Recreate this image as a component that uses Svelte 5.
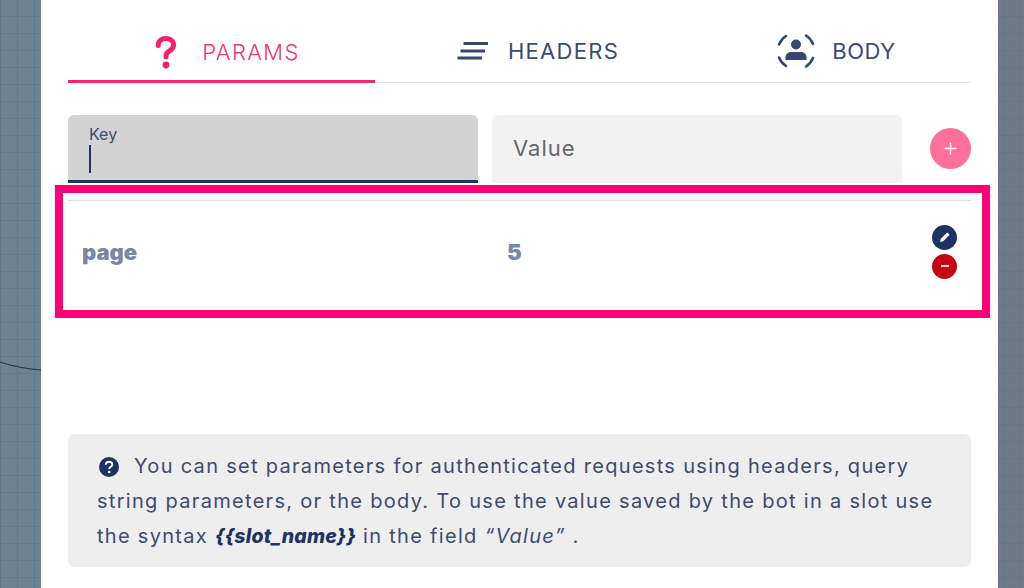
<script>
  const tabs = ['PARAMS', 'HEADERS', 'BODY'];
</script>

<div class="page">
  <svg class="curve" width="41" height="20" viewBox="0 0 41 20" aria-hidden="true">
    <path d="M0 2 C12 6 26 9 41 10" fill="none" stroke="#1f2d45" stroke-width="1" />
  </svg>
  <main class="panel">
    <nav class="tabs">
      <div class="tab active">
        <svg class="ico-q" width="22" height="34" viewBox="0 0 22 34" aria-hidden="true">
          <path d="M3.200 10.500C3.200 6 6.500 3.500 10.800 3.500S18.600 6 18.600 10c0 3-1.800 4.400-4 5.800-2.200 1.400-3.600 2.600-3.600 5.200v1" fill="none" stroke="#f7206f" stroke-width="5" stroke-linecap="round" />
          <circle cx="11" cy="30" r="3.400" fill="#f7206f" />
        </svg>
        <span>{tabs[0]}</span>
      </div>
      <div class="tab tab-headers">
        <svg width="32" height="20" viewBox="0 0 32 20" aria-hidden="true">
          <path d="M6.500 2.500H31M3.500 10H28M0.500 17H25" stroke="#36486e" stroke-width="3" />
        </svg>
        <span>{tabs[1]}</span>
      </div>
      <div class="tab tab-body">
        <svg width="40" height="40" viewBox="0 0 40 40" aria-hidden="true">
          <g fill="none" stroke="#36486e" stroke-width="2.600" stroke-linecap="round">
            <path d="M3 13.500A18 18 0 0 1 10 5" />
            <path d="M30 4.500A18 18 0 0 1 37 13" />
            <path d="M3 26.500A18 18 0 0 0 10 35" />
            <path d="M30 35.500A18 18 0 0 0 37 27" />
          </g>
          <circle cx="20" cy="13.500" r="5" fill="#36486e" />
          <path d="M9.500 29v-3c0-3 3-5 5.500-5h10c2.500 0 5.500 2 5.500 5v3z" fill="#36486e" />
        </svg>
        <span>{tabs[2]}</span>
      </div>
    </nav>

    <section class="form">
      <div class="field focused">
        <span class="label">Key</span>
        <span class="caret"></span>
      </div>
      <div class="field"><span class="placeholder">Value</span></div>
      <button class="add" aria-label="Add">
        <svg width="15" height="15" viewBox="0 0 15 15"><path d="M7.500 1.500v12M1.500 7.500h12" stroke="#fff" stroke-width="1.400" /></svg>
      </button>
    </section>

    <section class="highlight">
      <div class="row">
        <b class="key">page</b>
        <b class="val">5</b>
        <div class="actions">
          <span class="round edit">
            <svg width="16" height="16" viewBox="0 0 16 16"><path d="M3 13l.8-3.200 6.400-6.400 2.400 2.400-6.400 6.400z" fill="#fff" /></svg>
          </span>
          <span class="round del">
            <svg width="14" height="14" viewBox="0 0 14 14"><path d="M3 7h8" stroke="#fff" stroke-width="1.600" /></svg>
          </span>
        </div>
      </div>
    </section>

    <aside class="info">
      <svg class="info-ico" width="20" height="20" viewBox="0 0 20 20" aria-hidden="true">
        <circle cx="10" cy="10" r="10" fill="#1f3263" />
        <path d="M6.800 7.700C6.900 5.800 8.200 4.700 10.100 4.700c1.900 0 3.200 1.100 3.200 2.700 0 1.300-.8 1.900-1.700 2.500-.9.600-1.300 1-1.300 2" fill="none" stroke="#fff" stroke-width="1.900" />
        <circle cx="10.200" cy="15" r="1.300" fill="#fff" />
      </svg>
      <p>You can set parameters for authenticated requests using headers, query<br />string parameters, or the body. To use the value saved by the bot in a slot use<br />the syntax <strong>{'{{slot_name}}'}</strong> in the field <em>“Value”</em> .</p>
    </aside>
  </main>
</div>

<style>
  :global(body) {
    margin: 0;
  }
  .page {
    position: relative;
    width: 1024px;
    height: 588px;
    overflow: hidden;
    font-family: Inter, "Noto Sans", sans-serif;
    background-color: #6f7f8f;
    background-image:
      linear-gradient(#5f708080 1px, transparent 1px),
      linear-gradient(90deg, #5f708080 1px, transparent 1px),
      linear-gradient(90deg, #6f8393, #6e7886);
    background-size: 17px 17px, 17px 17px, 100% 100%;
    background-position: 0 16px, 0 16px, 0 0;
  }
  .curve {
    position: absolute;
    left: 0;
    top: 360px;
  }
  .panel {
    box-sizing: border-box;
    width: 957px;
    height: 588px;
    margin-left: 41px;
    padding: 0 27px;
    background: #fff;
    display: flex;
    flex-direction: column;
  }
  .tabs {
    display: flex;
    height: 83px;
    box-sizing: border-box;
    padding-top: 31px;
    border-bottom: 1px solid #e4e4e4;
  }
  .tab {
    flex: 0 0 326px;
    display: flex;
    justify-content: center;
    align-items: center;
    gap: 19px;
    height: 40px;
    color: #3d4b6e;
    font-size: 22px;
    font-weight: 400;
    letter-spacing: 1.300px;
  }
  .tab.active {
    flex: 0 0 307px;
    color: #f0356f;
    height: 52px;
    align-items: flex-start;
    box-sizing: border-box;
    padding-top: 4px;
    padding-left: 12px;
    border-bottom: 3px solid #f7266f;
    margin-bottom: -1px;
    gap: 25px;
    font-weight: 300;
  }
  .tab.active span {
    padding-top: 4px;
  }
  .ico-q {
    margin-top: 0;
  }
  .tab-body {
    flex: 0 0 270px;
    gap: 16px;
    letter-spacing: 0.600px;
  }
  .form {
    display: flex;
    align-items: center;
    gap: 14px;
    margin-top: 32px;
    height: 68px;
  }
  .field {
    position: relative;
    box-sizing: border-box;
    flex: 0 0 410px;
    height: 68px;
    background: #f2f2f2;
    border-radius: 6px 6px 0 0;
    padding: 0 0 2px 21px;
    display: flex;
    flex-direction: column;
    justify-content: center;
    font-size: 22px;
    color: #686868;
  }
  .placeholder {
    letter-spacing: 1px;
  }
  .focused {
    background: #d3d3d3;
    border-bottom: 3px solid #1f3263;
    justify-content: flex-start;
    padding-top: 10px;
  }
  .label {
    font-size: 16px;
    line-height: 19px;
    color: #3d4b6e;
  }
  .caret {
    width: 2px;
    height: 28px;
    margin-top: 1px;
    background: #1f3263;
  }
  .add {
    box-sizing: border-box;
    width: 41px;
    height: 41px;
    margin: 0 0 2px 14px;
    padding: 0;
    border: 0;
    border-radius: 50%;
    background: #fc709b;
    display: flex;
    align-items: center;
    justify-content: center;
  }
  .highlight {
    box-sizing: border-box;
    height: 133px;
    margin: 2px -19px 0 -13px;
    border: 8px solid #ff0078;
    padding: 7px 11px 0 5px;
  }
  .row {
    box-sizing: border-box;
    height: 102px;
    border-top: 1px solid #dfdfdf;
    display: flex;
    align-items: center;
    color: #7a86a3;
    font-size: 22px;
    font-weight: 700;
    padding-left: 14px;
  }
  .key {
    flex: 0 0 425px;
  }
  .val {
    flex: 1;
    padding-top: 1px;
  }
  .actions {
    display: flex;
    flex-direction: column;
    gap: 4px;
    margin-right: 14px;
  }
  .round {
    width: 25px;
    height: 25px;
    border-radius: 50%;
    display: flex;
    align-items: center;
    justify-content: center;
  }
  .edit {
    background: #1f3263;
  }
  .del {
    background: #c60313;
  }
  .info {
    position: relative;
    box-sizing: border-box;
    height: 133px;
    margin-top: 116px;
    background: #eeeeee;
    border-radius: 7px;
    padding: 15px 29px 0;
    color: #3d4b6e;
    font-size: 20px;
    line-height: 35px;
    letter-spacing: 1.300px;
  }
  .info p {
    margin: 0;
    text-indent: 37px;
    white-space: nowrap;
  }
  .info-ico {
    position: absolute;
    left: 31px;
    top: 23px;
  }
  .info strong {
    font-weight: 800;
    font-style: italic;
    color: #1f3263;
    letter-spacing: 0.200px;
    font-size: 19.500px;
  }
  .info em {
    font-style: italic;
    margin-left: 0;
  }
</style>
